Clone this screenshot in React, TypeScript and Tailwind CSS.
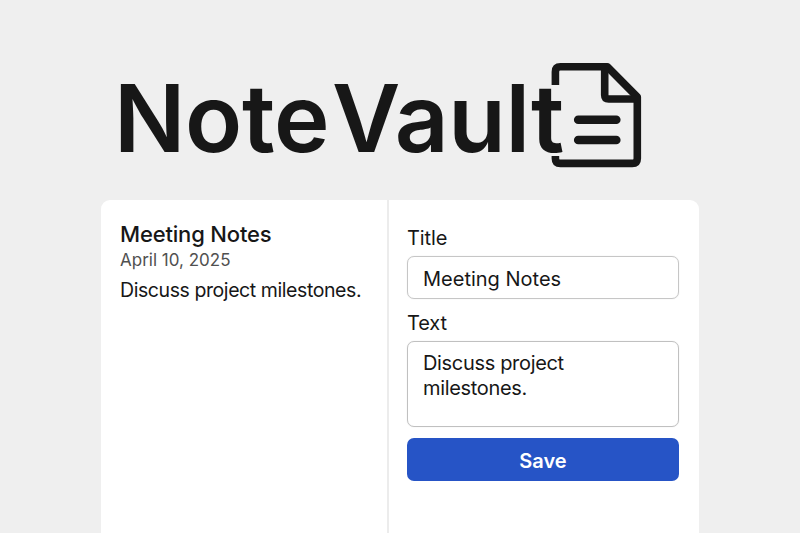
function DocumentIcon() {
  return (
    <svg
      className="h-[110px] w-[100px] shrink-0"
      viewBox="546 60 100 110"
      fill="none"
      stroke="#171717"
      strokeWidth="7.6"
      strokeLinejoin="round"
    >
      <path d="M555.4 85V71.8Q555.4 66.8 560.4 66.8H607.3L637.3 97V158.4Q637.3 163.4 632.3 163.4H560.4Q555.4 163.4 555.4 158.4V156" />
      <path d="M604.7 67V95Q604.7 99 608.7 99H636" />
      <path d="M578.2 119.7H616.3M578.2 140H616.3" strokeLinecap="round" strokeWidth="8.6" />
    </svg>
  );
}

function Brand() {
  return (
    <header className="flex h-[200px] shrink-0 pl-[114px] pt-[60px]">
      <h1 className="flex h-[110px] w-[432px] shrink-0 items-start whitespace-nowrap pt-[1px] text-[94px] font-semibold leading-[114px] text-[#171717]">
        <span className="w-[218px] shrink-0 tracking-[-0.3px]">Note</span>
        <span className="shrink-0 tracking-[-0.4px]">Vault</span>
      </h1>
      <DocumentIcon />
    </header>
  );
}

export default function App() {
  return (
    <div className="flex h-[533px] w-[800px] flex-col overflow-hidden bg-[#efefef] font-['Inter',sans-serif] text-[#171717]">
      <Brand />
      <main className="ml-[101px] flex w-[598px] flex-1 rounded-t-[9px] bg-white">
        <section className="w-[288px] border-r-2 border-[#ececec] pl-[19px] pt-[20px]">
          <h2 className="whitespace-nowrap text-[22px] font-medium leading-[28px] tracking-[-0.17px]">Meeting Notes</h2>
          <p className="whitespace-nowrap text-[17px] leading-[25px] text-[#505050]">April 10, 2025</p>
          <p className="mt-[4px] whitespace-nowrap text-[19.5px] leading-[26px] tracking-[-0.42px]">Discuss project milestones.</p>
        </section>
        <section className="flex flex-1 flex-col pl-[18px] pr-[20px] pt-[26px]">
          <label className="text-[20px] leading-[24px] tracking-[-0.1px]">Title</label>
          <div className="mt-[6px] flex h-[43px] items-center rounded-[7px] border border-[#c6c6c6] px-[15px] pt-[2px] text-[20px] shadow-[0_0_1px_#d4d4d4]">
            Meeting Notes
          </div>
          <label className="mt-[12px] text-[20px] leading-[24px] tracking-[-0.1px]">Text</label>
          <div className="mt-[6px] h-[86px] rounded-[7px] border border-[#c0c0c0] pl-[15px] pr-[80px] pt-[9px] text-[20px] leading-[25px] tracking-[-0.33px] shadow-[0_0_1px_#d4d4d4]">
            Discuss project milestones.
          </div>
          <button className="mt-[11px] h-[43px] rounded-[7px] bg-[#2654c6] pt-[2px] text-[20px] font-semibold text-white">
            Save
          </button>
        </section>
      </main>
    </div>
  );
}
